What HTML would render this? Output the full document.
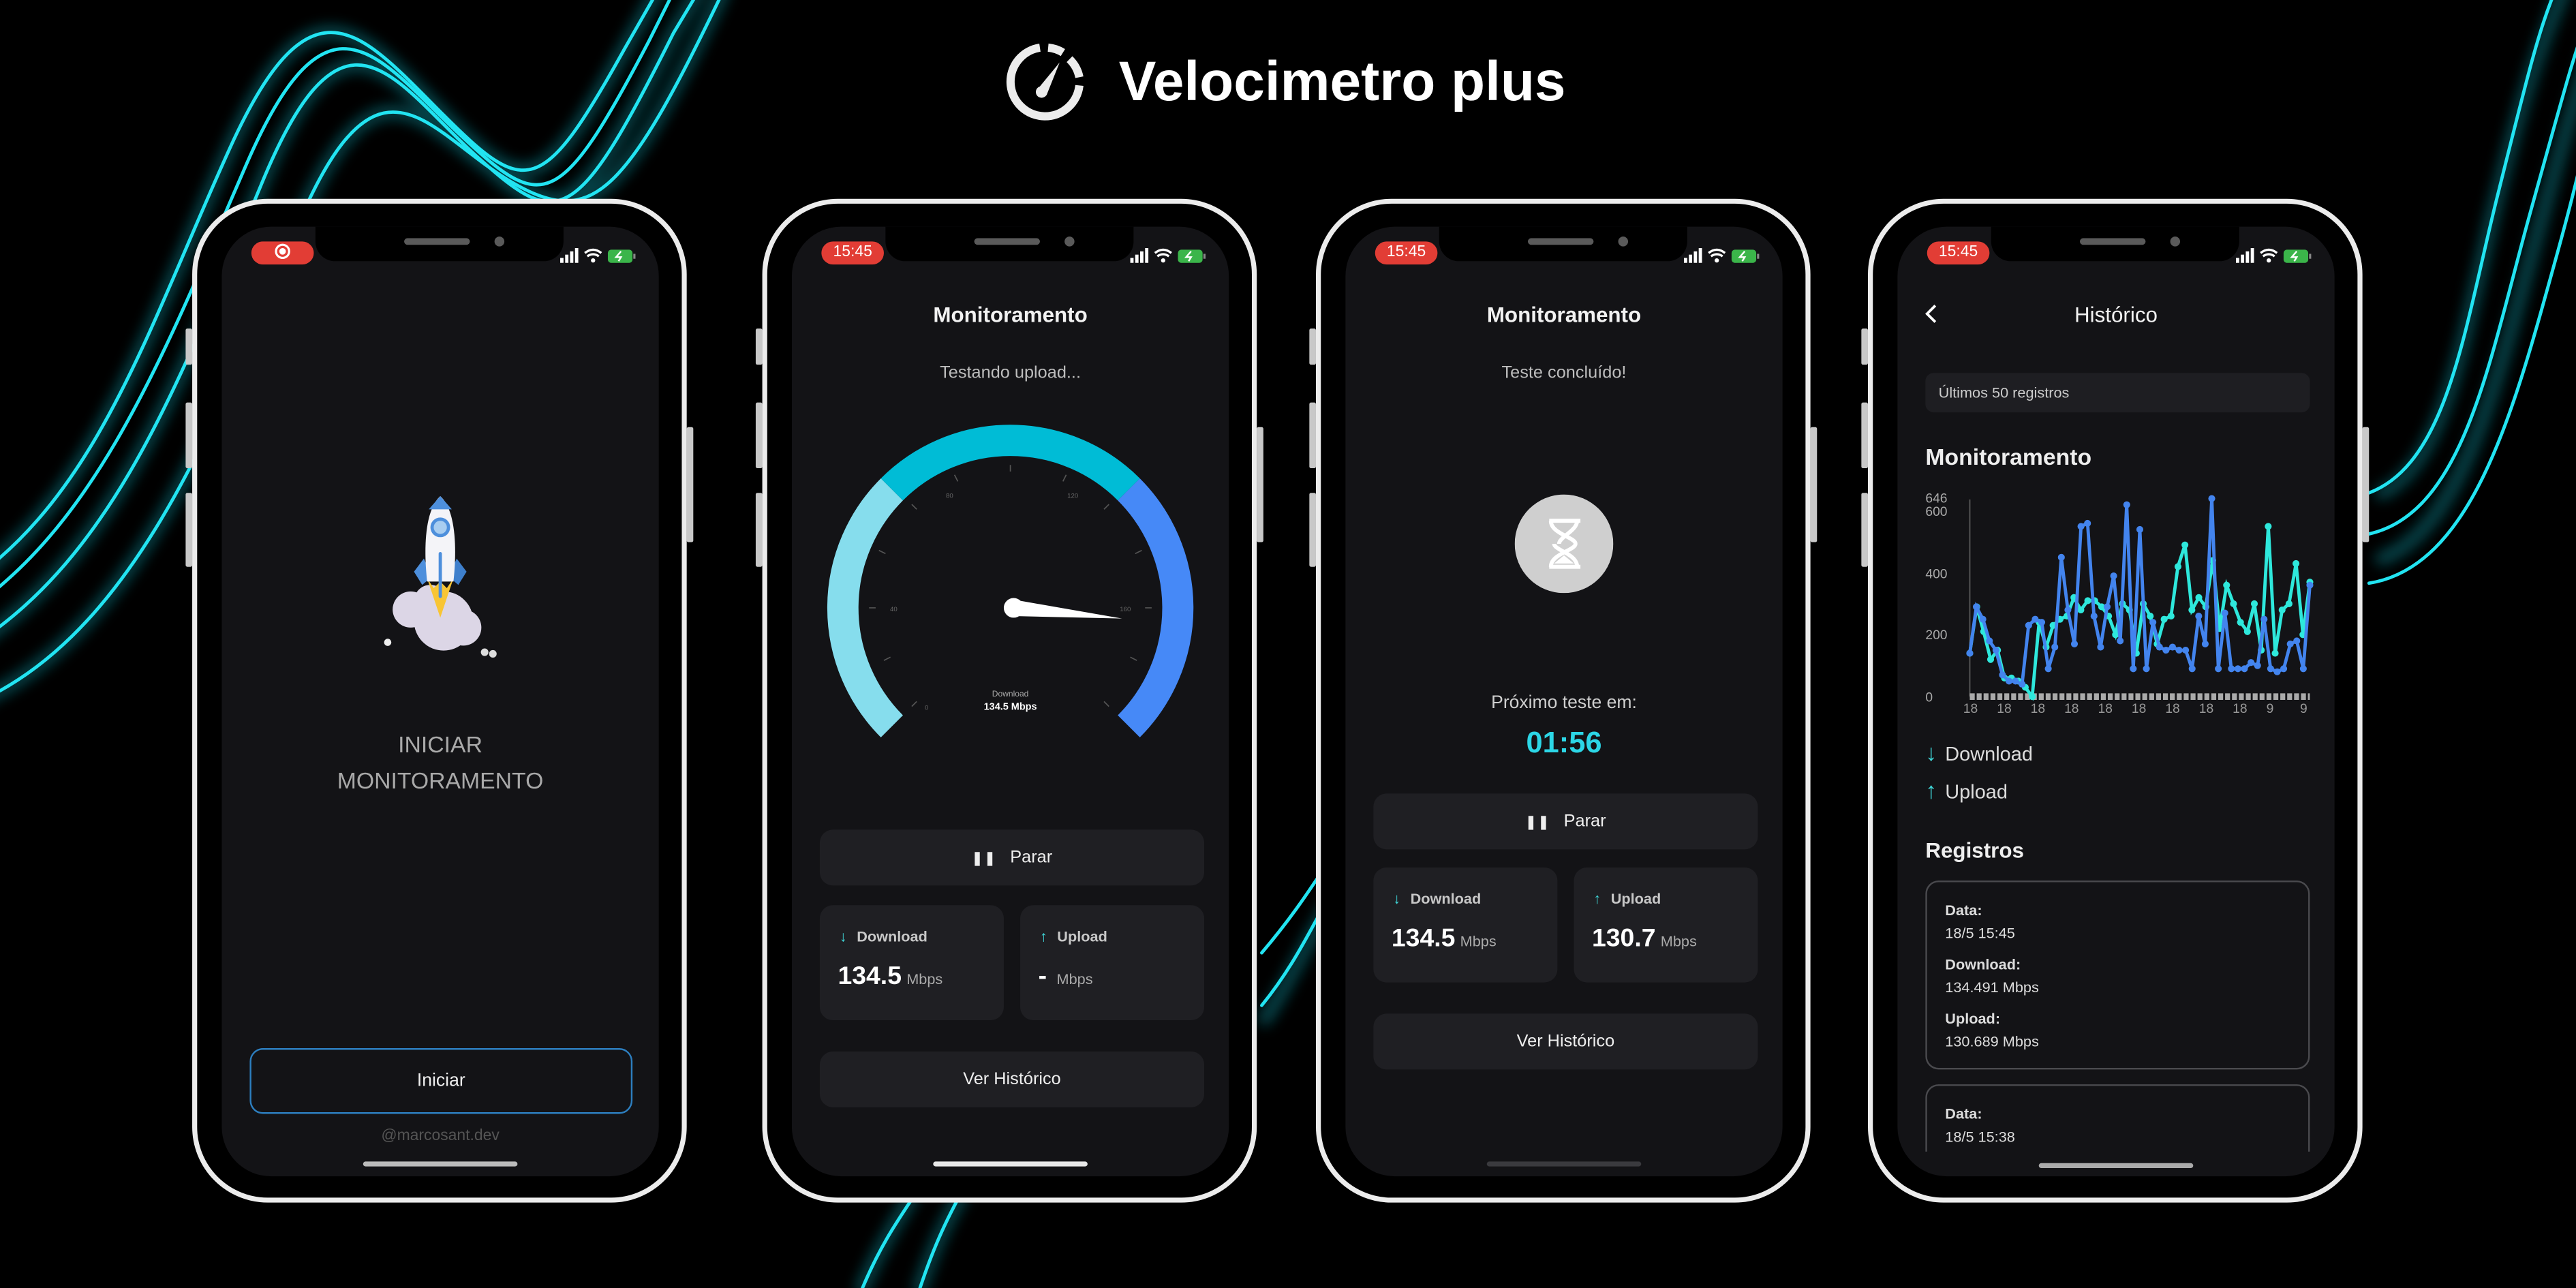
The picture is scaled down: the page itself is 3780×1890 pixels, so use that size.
<!DOCTYPE html>
<html><head><meta charset="utf-8">
<style>
html,body{margin:0;padding:0;background:#000;width:3780px;height:1890px;overflow:hidden}
#w{position:absolute;left:0;top:0;width:1568px;height:784px;transform:scale(2.41072);transform-origin:0 0;font-family:"Liberation Sans",sans-serif;color:#fff}
.ph{position:absolute;top:121px;width:301px;height:611px;border:3px solid #ececec;border-radius:46px;background:#000;box-sizing:border-box}
.btnL,.btnR{position:absolute;background:#c8c8c8;width:4px;border-radius:1px}
.sc{position:absolute;left:15px;top:14px;width:266px;height:578px;border-radius:30px;background:#131316;overflow:hidden}
.notch{position:absolute;left:57px;top:0;width:151px;height:21px;background:#000;border-radius:0 0 12px 12px}
.spk{position:absolute;left:54px;top:7px;width:40px;height:4px;border-radius:2px;background:#5a5a5a}
.cam{position:absolute;left:109px;top:6px;width:6px;height:6px;border-radius:50%;background:#5a5a5a}
.pill{position:absolute;left:18px;top:9px;width:38px;height:14px;border-radius:7px;background:#e23d35;font-size:9.5px;line-height:14px;text-align:center;color:#fff}
.st{position:absolute;left:205px;top:12px}
.ttl{position:absolute;left:0;width:266px;text-align:center;font-size:13px;font-weight:bold;color:#f2f2f2}
.sub{position:absolute;left:0;width:266px;text-align:center;font-size:10.5px;color:#bdbdbd}
.bt{position:absolute;left:17px;width:234px;height:34px;border-radius:8px;background:#1f1f23;text-align:center;line-height:34px;font-size:10.5px;color:#eee}
.cd{position:absolute;width:112px;height:70px;border-radius:8px;background:#1f1f23}
.cd .l{position:absolute;left:12px;top:14px;font-size:9px;color:#c8c8c8;font-weight:bold}
.cd .l b{color:#3fd6d8;font-weight:bold;margin-right:6px}
.cd .v{position:absolute;left:11px;top:35px;font-size:15.5px;font-weight:bold;color:#fff;white-space:nowrap}
.cd .v span{font-size:9px;font-weight:normal;color:#aaa;margin-left:3px}
.home{position:absolute;left:86px;top:569px;width:94px;height:3px;border-radius:2px;background:#e8e8e8}
.t{position:absolute;white-space:nowrap}
</style></head><body>
<div id="w">
<svg width="1568" height="784" style="position:absolute;left:0;top:0">
<defs><filter id="g" x="-20%" y="-20%" width="140%" height="140%"><feGaussianBlur stdDeviation="4"/></filter></defs>
<g fill="none" stroke-linecap="round">
<g stroke="#0fb8c8" stroke-width="9" opacity=".35" filter="url(#g)">
<path d="M-20 355 C60 300 90 200 140 90 S220 20 270 70 S330 120 380 30 L400 -5"/>
<path d="M-20 395 C70 340 110 230 160 110 S240 50 290 95 S350 140 410 20 L425 -5"/>
<path d="M-20 430 C80 390 130 260 180 140 S260 80 310 110 S380 120 440 -5"/>
<path d="M1450 300 C1490 280 1500 200 1520 120 S1550 20 1560 -5"/>
<path d="M1450 340 C1500 320 1520 230 1545 140 S1568 60 1580 20"/>
<path d="M525 784 C535 760 545 745 555 728 M560 784 C568 760 575 745 585 728"/>
<path d="M770 620 C790 590 800 560 830 520"/>
</g>
<g stroke="#22e4f2" stroke-width="2">
<path d="M-20 355 C60 300 90 200 140 90 S220 20 270 70 S330 120 380 30 L400 -5"/>
<path d="M-20 372 C60 318 100 215 150 100 S230 35 280 82 S340 130 395 25 L410 -5"/>
<path d="M-20 395 C70 340 110 230 160 110 S240 50 290 95 S350 140 410 20 L425 -5"/>
<path d="M-20 430 C80 390 130 260 180 140 S260 80 310 110 S380 120 440 -5"/>
<path d="M1442 300 C1490 282 1500 200 1520 120 S1545 20 1555 -5"/>
<path d="M1442 325 C1500 312 1515 220 1540 130 S1565 40 1575 10"/>
<path d="M1442 355 C1505 345 1530 250 1555 160 S1570 90 1580 60"/>
<path d="M525 784 C535 760 545 745 555 730 M560 784 C568 760 575 745 583 730"/>
<path d="M768 612 C790 585 800 560 810 545 M768 580 C785 560 795 545 805 530"/>
</g></g>
<g transform="translate(636,50)">
<path d="M-3 -21 A21 21 0 1 0 21 2" fill="none" stroke="#ececec" stroke-width="5"/>
<path d="M2 -21 A21 21 0 0 1 11 -18" fill="none" stroke="#ececec" stroke-width="5"/>
<path d="M15 -14 A21 21 0 0 1 21 -3" fill="none" stroke="#ececec" stroke-width="5"/>
<path d="M-5 5 L9 -12 L1 8 Z" fill="#ececec"/><circle cx="-2" cy="6" r="3.5" fill="#ececec"/>
</g>
<text x="681" y="61" font-family="Liberation Sans" font-weight="bold" font-size="34" fill="#fff">Velocimetro plus</text>
</svg>

<!-- Phone 1 -->
<div class="btnL" style="left:113px;top:200px;height:22px"></div><div class="btnL" style="left:113px;top:245px;height:40px"></div><div class="btnL" style="left:113px;top:300px;height:45px"></div><div class="btnR" style="left:418px;top:260px;height:70px"></div>
<div class="ph" style="left:117px"><div class="sc">
<div class="notch"><div class="spk"></div><div class="cam"></div></div>
<div class="pill"><svg width="12" height="12" style="vertical-align:-2px"><circle cx="6" cy="6" r="4" fill="none" stroke="#fff" stroke-width="1.3"/><circle cx="6" cy="6" r="2" fill="#fff"/></svg></div>
<svg class="st" width="50" height="12"><g fill="#fff"><rect x="1" y="7" width="2" height="3"/><rect x="4" y="5" width="2" height="5"/><rect x="7" y="3" width="2" height="7"/><rect x="10" y="1" width="2" height="9"/></g><path d="M16 4 Q21 0 26 4 M17.5 6 Q21 3.5 24.5 6" stroke="#fff" stroke-width="1.4" fill="none"/><circle cx="21" cy="8.5" r="1.3" fill="#fff"/><rect x="30" y="2" width="15" height="8" rx="2" fill="#3bb54a"/><rect x="45.5" y="4.5" width="1.3" height="3" fill="#888"/><path d="M38 3 L35 6.5 H38 L36.5 9" stroke="#fff" stroke-width="1" fill="none"/></svg>
<svg style="position:absolute;left:83px;top:158px" width="100" height="115" viewBox="0 0 100 115">
<circle cx="32" cy="75" r="11" fill="#dcd6e6"/><circle cx="52" cy="82" r="18" fill="#dcd6e6"/><circle cx="64" cy="86" r="11" fill="#dcd6e6"/><circle cx="44" cy="70" r="10" fill="#dcd6e6"/>
<circle cx="18" cy="95" r="2.2" fill="#eee"/><circle cx="77" cy="101" r="2.3" fill="#ddd"/><circle cx="82" cy="102" r="2.3" fill="#ddd"/>
<path d="M40 44 L34 52 L39 60 L45 55 Z" fill="#4d8fdc"/><path d="M60 44 L66 52 L61 60 L55 55 Z" fill="#3e7fcc"/>
<path d="M42 56 L50 80 L58 56 L54 62 L50 58 L46 62 Z" fill="#f8c534"/>
<path d="M50 6 C40 15 40 40 42 58 L58 58 C60 40 60 15 50 6 Z" fill="#f4f4f8"/>
<path d="M50 6 L43 14 L57 14 Z" fill="#4d8fdc"/>
<circle cx="50" cy="25" r="6" fill="#4d8fdc"/><circle cx="50" cy="25" r="4" fill="#a8cdf0"/>
<rect x="49" y="40" width="2" height="28" rx="1" fill="#4d8fdc"/>
</svg>
<div class="t" style="left:0;width:266px;text-align:center;top:304px;font-size:14px;line-height:22px;color:#a9a9a9">INICIAR<br>MONITORAMENTO</div>
<div style="position:absolute;left:17px;top:500px;width:233px;height:40px;box-sizing:border-box;border:1px solid #2d7fc0;border-radius:8px;text-align:center;line-height:38px;font-size:11px;color:#eee">Iniciar</div>
<div class="t" style="left:0;width:266px;text-align:center;top:548px;font-size:9.5px;color:#555">@marcosant.dev</div>
<div class="home" style="background:#bbb"></div>
</div></div>

<!-- Phone 2 -->
<div class="btnL" style="left:460px;top:200px;height:22px"></div><div class="btnL" style="left:460px;top:245px;height:40px"></div><div class="btnL" style="left:460px;top:300px;height:45px"></div><div class="btnR" style="left:765px;top:260px;height:70px"></div>
<div class="ph" style="left:464px"><div class="sc">
<div class="notch"><div class="spk"></div><div class="cam"></div></div>
<div class="pill">15:45</div>
<svg class="st" width="50" height="12"><g fill="#fff"><rect x="1" y="7" width="2" height="3"/><rect x="4" y="5" width="2" height="5"/><rect x="7" y="3" width="2" height="7"/><rect x="10" y="1" width="2" height="9"/></g><path d="M16 4 Q21 0 26 4 M17.5 6 Q21 3.5 24.5 6" stroke="#fff" stroke-width="1.4" fill="none"/><circle cx="21" cy="8.5" r="1.3" fill="#fff"/><rect x="30" y="2" width="15" height="8" rx="2" fill="#3bb54a"/><rect x="45.5" y="4.5" width="1.3" height="3" fill="#888"/><path d="M38 3 L35 6.5 H38 L36.5 9" stroke="#fff" stroke-width="1" fill="none"/></svg>
<div class="ttl" style="top:46px">Monitoramento</div>
<div class="sub" style="top:83px">Testando upload...</div>
<svg style="position:absolute;left:0;top:0" width="266" height="340">
<g fill="none" stroke-width="19">
<path d="M60.9 304.1 A102 102 0 0 1 60.9 159.9" stroke="#86dded"/>
<path d="M60.9 159.9 A102 102 0 0 1 205.1 159.9" stroke="#00bcd6"/>
<path d="M205.1 159.9 A102 102 0 0 1 205.1 304.1" stroke="#4689f7"/>
</g>
<g stroke="#555" stroke-width=".7">
<path d="M76 289 L73 292 M60 262 L56 264 M51 232 L47 232 M57 199 L53 197 M76 172 L73 169 M101 155 L99 151 M133 149 V145 M165 155 L167 151 M190 172 L193 169 M209 199 L213 197 M215 232 L219 232 M206 262 L210 264 M190 289 L193 292"/></g>
<g fill="#666" font-size="4" text-anchor="middle"><text x="82" y="294">0</text><text x="62" y="234">40</text><text x="96" y="165">80</text><text x="171" y="165">120</text><text x="203" y="234">160</text></g>
<path d="M135 227 L201 238.5 L135 237 Z" fill="#fff"/><circle cx="135" cy="232" r="6" fill="#fff"/>
<text x="133" y="286" fill="#aaa" font-size="5" text-anchor="middle">Download</text>
<text x="133" y="294" fill="#fff" font-size="6" font-weight="bold" text-anchor="middle">134.5 Mbps</text>
</svg>
<div class="bt" style="top:367px"><b style="font-size:8px;letter-spacing:1px;margin-right:8px">❚❚</b>Parar</div>
<div class="cd" style="left:17px;top:413px"><div class="l"><b>↓</b>Download</div><div class="v">134.5<span>Mbps</span></div></div>
<div class="cd" style="left:139px;top:413px"><div class="l"><b>↑</b>Upload</div><div class="v">-<span style="margin-left:6px">Mbps</span></div></div>
<div class="bt" style="top:502px">Ver Histórico</div>
<div class="home"></div>
</div></div>

<!-- Phone 3 -->
<div class="btnL" style="left:797px;top:200px;height:22px"></div><div class="btnL" style="left:797px;top:245px;height:40px"></div><div class="btnL" style="left:797px;top:300px;height:45px"></div><div class="btnR" style="left:1102px;top:260px;height:70px"></div>
<div class="ph" style="left:801px"><div class="sc">
<div class="notch"><div class="spk"></div><div class="cam"></div></div>
<div class="pill">15:45</div>
<svg class="st" width="50" height="12"><g fill="#fff"><rect x="1" y="7" width="2" height="3"/><rect x="4" y="5" width="2" height="5"/><rect x="7" y="3" width="2" height="7"/><rect x="10" y="1" width="2" height="9"/></g><path d="M16 4 Q21 0 26 4 M17.5 6 Q21 3.5 24.5 6" stroke="#fff" stroke-width="1.4" fill="none"/><circle cx="21" cy="8.5" r="1.3" fill="#fff"/><rect x="30" y="2" width="15" height="8" rx="2" fill="#3bb54a"/><rect x="45.5" y="4.5" width="1.3" height="3" fill="#888"/><path d="M38 3 L35 6.5 H38 L36.5 9" stroke="#fff" stroke-width="1" fill="none"/></svg>
<div class="ttl" style="top:46px">Monitoramento</div>
<div class="sub" style="top:83px">Teste concluído!</div>
<svg style="position:absolute;left:103px;top:163px" width="60" height="60">
<circle cx="30" cy="30" r="30" fill="#cfcfcf"/>
<path d="M21 16 H40 M21 44 H40 M22 16 C22 24 37 26 37 30 C37 34 22 36 22 44 M38 16 C38 22 27 26 27 30 M38 44 C38 36 24 34 24 30" stroke="#fff" stroke-width="2.4" fill="none"/>
<path d="M24 42 L30 37 L36 42 Z" fill="#fff"/></svg>
<div class="t" style="left:0;width:266px;text-align:center;top:284px;font-size:11px;color:#cfcfcf">Próximo teste em:</div>
<div class="t" style="left:0;width:266px;text-align:center;top:304px;font-size:18px;font-weight:bold;color:#2cd6e6">01:56</div>
<div class="bt" style="top:345px"><b style="font-size:8px;letter-spacing:1px;margin-right:8px">❚❚</b>Parar</div>
<div class="cd" style="left:17px;top:390px"><div class="l"><b>↓</b>Download</div><div class="v">134.5<span>Mbps</span></div></div>
<div class="cd" style="left:139px;top:390px"><div class="l"><b>↑</b>Upload</div><div class="v">130.7<span>Mbps</span></div></div>
<div class="bt" style="top:479px">Ver Histórico</div>
<div class="home" style="background:#3a3a3e;top:569px"></div>
</div></div>

<!-- Phone 4 -->
<div class="btnL" style="left:1133px;top:200px;height:22px"></div><div class="btnL" style="left:1133px;top:245px;height:40px"></div><div class="btnL" style="left:1133px;top:300px;height:45px"></div><div class="btnR" style="left:1438px;top:260px;height:70px"></div>
<div class="ph" style="left:1137px"><div class="sc">
<div style="position:absolute;left:0;top:0;width:266px;height:563px;overflow:hidden">
<div class="t" style="left:17px;top:89px;width:234px;height:24px;background:#1e1e22;border-radius:5px;font-size:9px;line-height:24px;color:#ccc;text-indent:8px">Últimos 50 registros</div>
<div class="t" style="left:17px;top:132px;font-size:14px;font-weight:bold;color:#eee">Monitoramento</div>
<svg id="ch" style="position:absolute;left:0;top:0" width="266" height="300">
<g fill="#aaa" font-size="8"><text x="17" y="168">646</text><text x="17" y="176">600</text><text x="17" y="214">400</text><text x="17" y="251">200</text><text x="17" y="289">0</text></g>
<line x1="44" y1="166" x2="44" y2="286" stroke="#555" stroke-width=".8"/>
<line x1="44" y1="286" x2="251" y2="286" stroke="#aaa" stroke-width="4" stroke-dasharray="3 1.2"/>
<g fill="#999" font-size="8" id="xl"></g>
</svg>
<div class="t" style="left:17px;top:312px;font-size:12px;color:#ddd"><span style="color:#3fd6d8;margin-right:5px;font-size:14px;font-weight:bold">↓</span>Download</div>
<div class="t" style="left:17px;top:335px;font-size:12px;color:#ddd"><span style="color:#3fd6d8;margin-right:5px;font-size:14px;font-weight:bold">↑</span>Upload</div>
<div class="t" style="left:17px;top:372px;font-size:13px;font-weight:bold;color:#eee">Registros</div>
<div style="position:absolute;left:17px;top:398px;width:234px;height:115px;box-sizing:border-box;border:1px solid #4a4a4e;border-radius:8px;font-size:9px;color:#ddd">
<div class="t" style="left:11px;top:12px;font-weight:bold">Data:</div><div class="t" style="left:11px;top:26px">18/5 15:45</div>
<div class="t" style="left:11px;top:45px;font-weight:bold">Download:</div><div class="t" style="left:11px;top:59px">134.491 Mbps</div>
<div class="t" style="left:11px;top:78px;font-weight:bold">Upload:</div><div class="t" style="left:11px;top:92px">130.689 Mbps</div></div>
<div style="position:absolute;left:17px;top:522px;width:234px;height:115px;box-sizing:border-box;border:1px solid #4a4a4e;border-radius:8px;font-size:9px;color:#ddd">
<div class="t" style="left:11px;top:12px;font-weight:bold">Data:</div><div class="t" style="left:11px;top:26px">18/5 15:38</div></div>
</div>
<div class="notch"><div class="spk"></div><div class="cam"></div></div>
<div class="pill">15:45</div>
<svg class="st" width="50" height="12"><g fill="#fff"><rect x="1" y="7" width="2" height="3"/><rect x="4" y="5" width="2" height="5"/><rect x="7" y="3" width="2" height="7"/><rect x="10" y="1" width="2" height="9"/></g><path d="M16 4 Q21 0 26 4 M17.5 6 Q21 3.5 24.5 6" stroke="#fff" stroke-width="1.4" fill="none"/><circle cx="21" cy="8.5" r="1.3" fill="#fff"/><rect x="30" y="2" width="15" height="8" rx="2" fill="#3bb54a"/><rect x="45.5" y="4.5" width="1.3" height="3" fill="#888"/><path d="M38 3 L35 6.5 H38 L36.5 9" stroke="#fff" stroke-width="1" fill="none"/></svg>
<svg style="position:absolute;left:15px;top:46px" width="12" height="14"><path d="M8 2 L3 7 L8 12" stroke="#fff" stroke-width="1.6" fill="none"/></svg>
<div class="ttl" style="top:46px;font-weight:normal;font-size:13px">Histórico</div>
<div class="home" style="background:#aaa;top:570px"></div>
</div></div>
</div>
<script>
(function(){
var b=[140,290,250,180,150,70,50,50,40,230,250,240,90,160,450,280,170,550,560,260,160,290,390,180,620,90,540,90,240,160,150,160,150,150,90,260,170,640,90,270,90,90,90,110,100,250,90,80,90,170,180,90,360];
var c=[140,290,210,120,150,60,60,50,30,0,240,160,230,250,260,320,280,310,310,290,260,200,300,280,140,300,260,170,250,260,420,490,280,320,290,440,220,360,300,240,210,300,150,550,140,280,300,430,200,370];
var s=document.getElementById('ch'),ns='http://www.w3.org/2000/svg';
function line(a,col){var p=[],n=a.length;for(var i=0;i<n;i++){var x=44+i*207/(n-1),y=286-a[i]*113/600;p.push(x.toFixed(1)+','+y.toFixed(1));var d=document.createElementNS(ns,'circle');d.setAttribute('cx',x);d.setAttribute('cy',y);d.setAttribute('r',2.1);d.setAttribute('fill',col);s.appendChild(d);}
var l=document.createElementNS(ns,'polyline');l.setAttribute('points',p.join(' '));l.setAttribute('fill','none');l.setAttribute('stroke',col);l.setAttribute('stroke-width',2);s.appendChild(l);}
line(c,'#2ee8dc');line(b,'#4384ee');
var xl=document.getElementById('xl');var lab=['18','18','18','18','18','18','18','18','18','9','9'];
for(var i=0;i<11;i++){var t=document.createElementNS(ns,'text');t.setAttribute('x',40+i*20.5);t.setAttribute('y',296);t.textContent=lab[i];xl.appendChild(t);}
})();
</script>
</body></html>
